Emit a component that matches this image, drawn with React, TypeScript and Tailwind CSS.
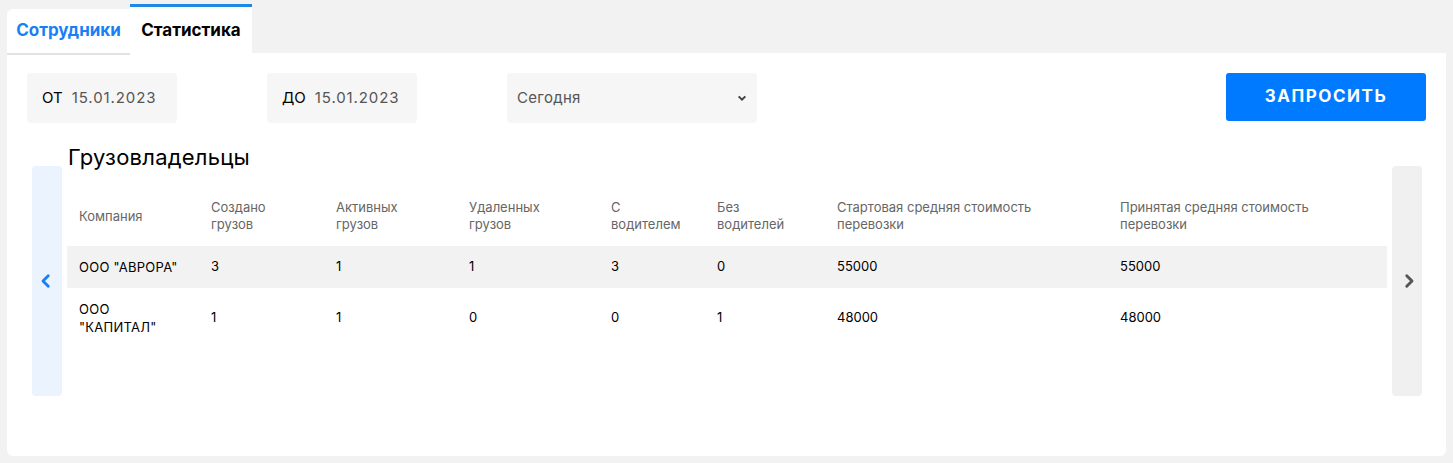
import React from 'react';

const rows = [
  { company: 'ООО "АВРОРА"', created: 3, active: 1, deleted: 1, withDriver: 3, noDriver: 0, start: 55000, accepted: 55000 },
  { company: 'ООО "КАПИТАЛ"', created: 1, active: 1, deleted: 0, withDriver: 0, noDriver: 1, start: 48000, accepted: 48000 },
];

const Chevron = ({ dir, className }: { dir: 'left' | 'right'; className: string }) => (
  <svg viewBox="0 0 24 24" className={className} fill="none" stroke="currentColor" strokeWidth={3.8} strokeLinecap="round" strokeLinejoin="round">
    {dir === 'left' ? <path d="M15 5l-7 7 7 7" /> : <path d="M9 5l7 7-7 7" />}
  </svg>
);

export default function App() {
  return (
    <div className="min-h-screen bg-[#f2f2f2] px-[7px] pt-1 pb-[7px] text-black" style={{ fontFamily: 'Inter, "Noto Sans", sans-serif' }}>
      {/* tabs */}
      <div className="flex items-end h-[49px]">
        <button className="h-[44px] w-[123px] bg-white rounded-tl-md shadow-[0_2px_0_#e2e2e2] text-[17px] font-bold text-[#1a7ff5] flex items-center justify-center">
          Сотрудники
        </button>
        <button className="h-[49px] w-[122px] bg-white border-t-[3px] border-[#1e88e5] text-[17px] font-bold flex items-center justify-center pt-[2px]">
          Статистика
        </button>
      </div>

      <div className="bg-white rounded-b-md h-[403px] pt-5 px-5">
        {/* filters */}
        <div className="flex items-center">
          <div className="h-[50px] w-[150px] bg-[#f6f6f6] rounded flex items-center px-[15px] gap-[9px]">
            <span className="text-[15px]">ОТ</span>
            <span className="text-[15px] text-[#555] tracking-[0.06em]">15.01.2023</span>
          </div>
          <div className="h-[50px] w-[150px] bg-[#f6f6f6] rounded flex items-center px-[15px] gap-[9px] ml-[90px]">
            <span className="text-[15px]">ДО</span>
            <span className="text-[15px] text-[#555] tracking-[0.06em]">15.01.2023</span>
          </div>
          <div className="h-[50px] w-[250px] bg-[#f6f6f6] rounded flex items-center justify-between px-[10px] ml-[90px]">
            <span className="text-[15px] text-[#555] tracking-[0.02em]">Сегодня</span>
            <svg viewBox="0 0 12 12" className="w-[10px] h-[10px] text-[#444]" fill="none" stroke="currentColor" strokeWidth={2.4}>
              <path d="M2 4l4 4 4-4" />
            </svg>
          </div>
          <button className="ml-auto h-[48px] w-[200px] bg-[#007bff] rounded-[3px] text-white font-bold text-[17px] tracking-[0.09em] mb-[2px]">
            ЗАПРОСИТЬ
          </button>
        </div>

        <h2 className="text-[22px] tracking-[0.01em] ml-[41px] mt-[21px] leading-[26px]">Грузовладельцы</h2>

        <div className="flex items-start mt-[-4px] ml-[5px]">
          <button className="w-[30px] h-[230px] bg-[#ebf3ff] rounded flex items-center justify-center pr-[3px]">
            <Chevron dir="left" className="w-[18px] h-[18px] text-[#1a7ff5]" />
          </button>
          <table className="w-[1320px] ml-[5px] mt-[25px] table-fixed text-[13px] border-collapse">
            <colgroup>
              <col className="w-[132px]" />
              <col className="w-[125px]" />
              <col className="w-[133px]" />
              <col className="w-[142px]" />
              <col className="w-[106px]" />
              <col className="w-[120px]" />
              <col className="w-[283px]" />
              <col className="w-[279px]" />
            </colgroup>
            <thead>
              <tr className="text-[#666] text-left align-middle">
                <th className="font-normal px-3 h-[55px] leading-[17px] pb-[5px]">Компания</th>
                <th className="font-normal px-3 leading-[17px] pb-[5px]">Создано<br />грузов</th>
                <th className="font-normal px-3 leading-[17px] pb-[5px]">Активных<br />грузов</th>
                <th className="font-normal px-3 leading-[17px] pb-[5px]">Удаленных<br />грузов</th>
                <th className="font-normal px-3 leading-[17px] pb-[5px]">С<br />водителем</th>
                <th className="font-normal px-3 leading-[17px] pb-[5px]">Без<br />водителей</th>
                <th className="font-normal px-3 leading-[17px] pb-[5px]">Стартовая средняя стоимость<br />перевозки</th>
                <th className="font-normal px-3 leading-[17px] pb-[5px]">Принятая средняя стоимость<br />перевозки</th>
              </tr>
            </thead>
            <tbody>
              {rows.map((r, i) => (
                <tr key={i} className={i === 0 ? 'bg-[#f2f2f2]' : ''}>
                  <td className={`px-3 leading-[18px] tracking-[0.02em] ${i === 0 ? 'h-[42px]' : 'h-[60px]'}`}>
                    {i === 0 ? r.company : <>ООО<br />"КАПИТАЛ"</>}
                  </td>
                  <td className="px-3">{r.created}</td>
                  <td className="px-3">{r.active}</td>
                  <td className="px-3">{r.deleted}</td>
                  <td className="px-3">{r.withDriver}</td>
                  <td className="px-3">{r.noDriver}</td>
                  <td className="px-3">{r.start}</td>
                  <td className="px-3">{r.accepted}</td>
                </tr>
              ))}
            </tbody>
          </table>
          <button className="w-[30px] h-[230px] bg-[#f0f0f0] rounded flex items-center justify-center pl-[3px] ml-[5px]">
            <Chevron dir="right" className="w-[18px] h-[18px] text-[#555]" />
          </button>
        </div>
      </div>
    </div>
  );
}
